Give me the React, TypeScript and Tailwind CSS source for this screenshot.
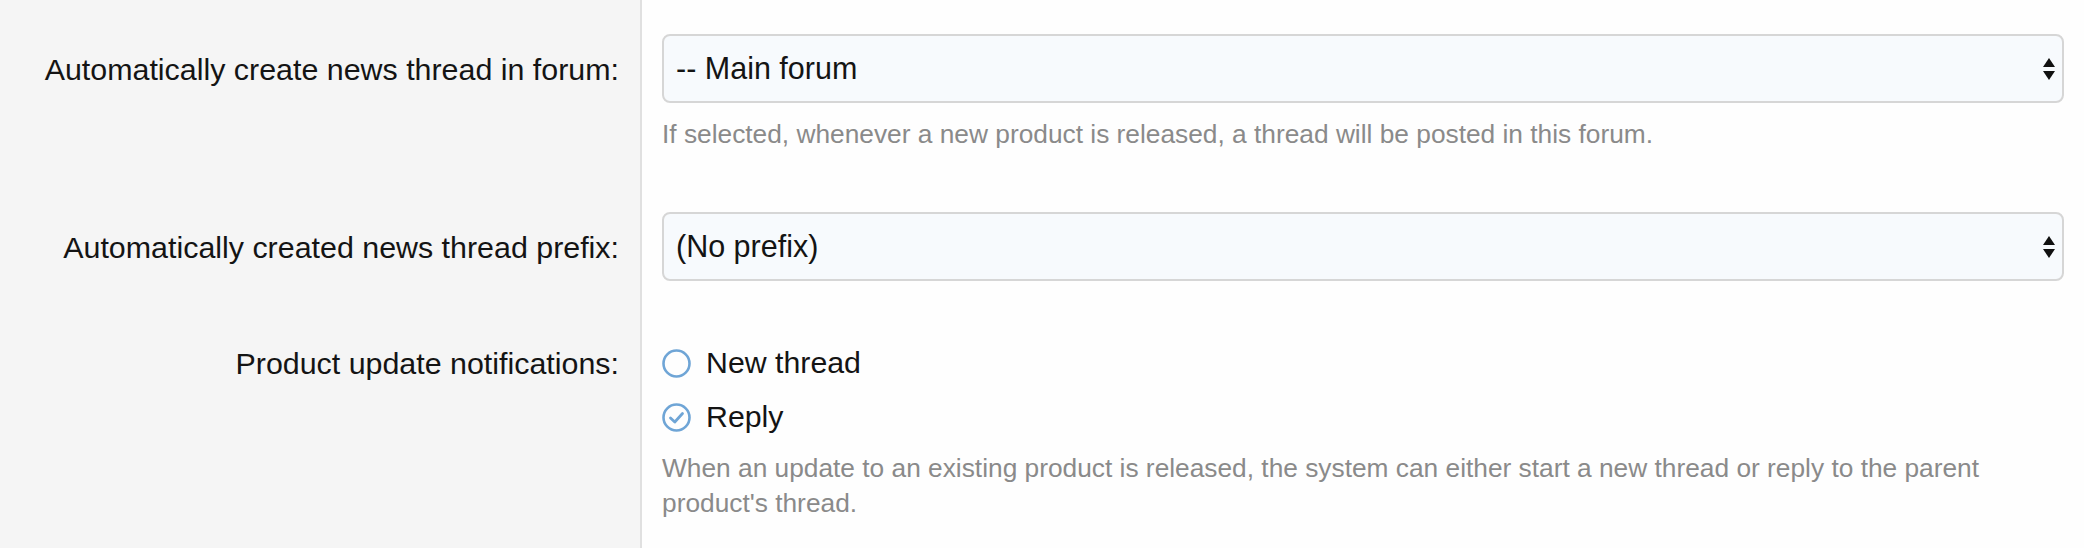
import React from "react";

const font = { fontFamily: '"Liberation Sans", Arial, Helvetica, sans-serif' };

const SelectArrows = () => (
  <svg width="12" height="22" viewBox="0 0 12 22" className="shrink-0">
    <polygon points="0,9 6,0 12,9" fill="#111" />
    <polygon points="0,13 12,13 6,22" fill="#111" />
  </svg>
);

const FakeSelect = ({ value }: { value: string }) => (
  <div className="flex h-[69px] w-full items-center justify-between rounded-[8px] border-2 border-[#d6d6d6] bg-[#f7fafd] pl-[12px] pr-[7px] text-[30.5px] text-[#141414]">
    <span>{value}</span>
    <SelectArrows />
  </div>
);

const Radio = ({ label, checked }: { label: string; checked?: boolean }) => (
  <label className="flex h-[42px] items-center gap-[15px] text-[30.3px] leading-[42px] text-[#141414]">
    <svg width="29" height="29" viewBox="0 0 29 29" className="shrink-0">
      <circle cx="14.5" cy="14.5" r="13" fill="none" stroke="#6fa5d6" strokeWidth="2.6" />
      {checked && (
        <polyline
          points="8.5,15 12.8,19 20.5,10.5"
          fill="none"
          stroke="#6fa5d6"
          strokeWidth="2.8"
          strokeLinecap="round"
          strokeLinejoin="round"
        />
      )}
    </svg>
    {label}
  </label>
);

const Row = ({
  label,
  labelPad,
  className,
  children,
}: {
  label?: string;
  labelPad: string;
  className: string;
  children?: React.ReactNode;
}) => (
  <div className="flex">
    <div className={`w-[642px] shrink-0 border-r-2 border-[#e0e0e0] bg-[#f5f5f5] pr-[21px] text-right text-[30.4px] leading-[42px] text-[#141414] ${className} ${labelPad}`}>
      {label}
    </div>
    <div className={`min-w-0 flex-1 px-[20px] ${className}`}>{children}</div>
  </div>
);

export default function App() {
  return (
    <div className="flex min-h-screen flex-col bg-[#fefefe]" style={font}>
      <Row
        label="Automatically create news thread in forum:"
        labelPad="pt-[48px]"
        className="pt-[34px] pb-[30px]"
      >
        <FakeSelect value="-- Main forum" />
        <p className="mt-[13px] text-[26.3px] leading-[36px] text-[#8a8a8a]">
          If selected, whenever a new product is released, a thread will be posted in this forum.
        </p>
      </Row>
      <Row
        label="Automatically created news thread prefix:"
        labelPad="pt-[44px]"
        className="pt-[30px] pb-[31px]"
      >
        <FakeSelect value="(No prefix)" />
      </Row>
      <Row
        label="Product update notifications:"
        labelPad="pt-[30px]"
        className="pt-[30px] pb-[6px]"
      >
        <div className="flex flex-col gap-[12px]">
          <Radio label="New thread" />
          <Radio label="Reply" checked />
        </div>
        <p className="mt-[13px] text-[26.3px] leading-[35px] text-[#8a8a8a]">
          When an update to an existing product is released, the system can either start a new thread or reply to the parent product's thread.
        </p>
      </Row>
      <div className="flex flex-1">
        <div className="w-[642px] shrink-0 border-r-2 border-[#e0e0e0] bg-[#f5f5f5]" />
        <div className="flex-1" />
      </div>
    </div>
  );
}
